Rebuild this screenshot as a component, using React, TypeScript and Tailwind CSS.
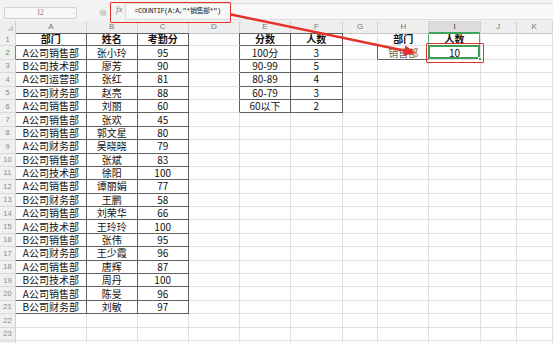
import { ZoomIn } from "lucide-react";

const LETTERS = ["", "A", "B", "C", "D", "E", "F", "G", "H", "I", "J", "K"];
const ROW_COUNT = 24;

type Cell = { t: string; b?: boolean; c?: string };

const people: [string, string, string][] = [
  ["A公司销售部", "张小玲", "95"],
  ["B公司技术部", "廖芳", "90"],
  ["A公司运营部", "张红", "81"],
  ["B公司财务部", "赵亮", "88"],
  ["A公司销售部", "刘丽", "60"],
  ["A公司销售部", "张欢", "45"],
  ["B公司销售部", "郭文星", "80"],
  ["A公司财务部", "吴晓晓", "79"],
  ["B公司销售部", "张斌", "83"],
  ["A公司技术部", "徐阳", "100"],
  ["A公司销售部", "谭丽娟", "77"],
  ["B公司财务部", "王鹏", "58"],
  ["A公司销售部", "刘荣华", "66"],
  ["A公司技术部", "王玲玲", "100"],
  ["B公司销售部", "张伟", "95"],
  ["A公司财务部", "王少霞", "96"],
  ["A公司销售部", "唐辉", "87"],
  ["B公司技术部", "周丹", "100"],
  ["A公司销售部", "陈旻", "96"],
  ["B公司财务部", "刘敏", "97"],
];

const scores: [string, string][] = [
  ["100分", "3"],
  ["90-99", "5"],
  ["80-89", "4"],
  ["60-79", "3"],
  ["60以下", "2"],
];

const cells: Record<string, Cell> = {};
const put = (r: number, c: number, cell: Cell) => {
  cells[`${r},${c}`] = cell;
};

put(1, 1, { t: "部门", b: true });
put(1, 2, { t: "姓名", b: true });
put(1, 3, { t: "考勤分", b: true });
people.forEach((p, i) => {
  put(i + 2, 1, { t: p[0] });
  put(i + 2, 2, { t: p[1] });
  put(i + 2, 3, { t: p[2] });
});
put(1, 5, { t: "分数", b: true });
put(1, 6, { t: "人数", b: true });
scores.forEach((s, i) => {
  put(i + 2, 5, { t: s[0] });
  put(i + 2, 6, { t: s[1] });
});
put(1, 8, { t: "部门", b: true });
put(1, 9, { t: "人数", b: true });
put(2, 8, { t: "销售部", c: "text-[#666]" });
put(2, 9, { t: "10" });

// bordered ranges: A1:C21 and E1:F6 (H2 only has left + bottom)
const inTable = (r: number, c: number) =>
  (r >= 1 && r <= 21 && c >= 1 && c <= 3) || (r >= 1 && r <= 6 && c >= 5 && c <= 6);

const darkRight = (r: number, c: number) =>
  inTable(r, c) || inTable(r, c + 1) || (r === 2 && c === 7);
const darkBottom = (r: number, c: number) =>
  inTable(r, c) || inTable(r + 1, c) || (r === 2 && c === 8);

const gridCols =
  "grid grid-cols-[16px_70.7px_51px_51px_51.3px_51px_51.7px_35.7px_51px_51.3px_36px_36px]";

function HeaderRow() {
  return (
    <div className={`${gridCols} h-[12px]`}>
      {LETTERS.map((l, c) => {
        if (c === 0) {
          return (
            <div key={c} className="relative bg-[#eeeeee] border-r border-b border-r-[#d0d0d0] border-b-[#c8c8c8]">
              <div className="absolute right-[2px] bottom-[2px] w-0 h-0 border-l-[6px] border-l-transparent border-b-[6px] border-b-[#c9c9c9]" />
            </div>
          );
        }
        const selected = c === 9;
        return (
          <div
            key={c}
            className={`relative flex items-center justify-center border-r border-b text-[8px] font-['Liberation_Sans',sans-serif] ${
              selected ? "bg-[#dcdcdc] text-[#333]" : "bg-[#eeeeee] text-[#777]"
            } border-r-[#d3d3d3] ${darkBottom(0, c) ? "border-b-[#606060]" : "border-b-[#c8c8c8]"}`}
          >
            {l}
            {selected && <div className="absolute left-0 right-0 bottom-[-1px] h-[2px] bg-[#3fa65a]" />}
          </div>
        );
      })}
    </div>
  );
}

function DataRow({ r }: { r: number }) {
  return (
    <div className={`${gridCols} h-[13.4px]`}>
      {LETTERS.map((_, c) => {
        if (c === 0) {
          return (
            <div
              key={c}
              className={`relative flex items-center justify-center bg-[#f0f0f0] border-b border-b-[#dadada] border-r text-[7.5px] font-['Liberation_Sans',sans-serif] ${
                r === 2 ? "border-r-[#3fa65a] text-[#3b8f50]" : "border-r-[#d0d0d0] text-[#888]"
              }`}
            >
              {r}
            </div>
          );
        }
        const cell = cells[`${r},${c}`];
        return (
          <div
            key={c}
            className={`relative flex items-center justify-center whitespace-nowrap border-r border-b text-[10px] leading-none ${
              darkRight(r, c) ? "border-r-[#606060]" : "border-r-[#e0e0e0]"
            } ${darkBottom(r, c) ? "border-b-[#606060]" : "border-b-[#e0e0e0]"} ${
              cell?.b ? "font-bold" : ""
            } ${cell?.c ?? "text-[#111]"}`}
          >
            {cell?.t}
            {r === 1 && c === 9 && (
              <div className="absolute -left-[1px] top-0 bottom-0 w-[calc(100%+1px)] border-x border-x-[#56b36c]" />
            )}
            {r === 2 && c === 9 && (
              <>
                <div className="absolute -left-[1px] -top-[1px] w-[calc(100%+1px)] h-[calc(100%+1px)] border-2 border-[#3a9e55]" />
                <div className="absolute -right-[2px] -bottom-[2px] w-[4px] h-[4px] bg-[#3a9e55] border border-white" />
              </>
            )}
          </div>
        );
      })}
    </div>
  );
}

export default function App() {
  const rows = Array.from({ length: ROW_COUNT }, (_, i) => i + 1);

  return (
    <div className="relative w-[553px] h-[343px] overflow-hidden bg-white font-['Noto_Sans_CJK_SC','Liberation_Sans',sans-serif] text-[#111]">
      {/* toolbar: name box + formula bar */}
      <div className="h-[21px] bg-[#f3f3f3] flex items-start">
        <div className="relative mt-[7px] ml-[4px] w-[73px] h-[12px] border border-[#d2d2d2] bg-[#f7f7f7] rounded-[2px] flex items-center justify-center">
          <span className="text-[8px] leading-none text-[#888] font-['Liberation_Serif',serif]">I2</span>
          <span className="absolute right-[1px] top-[2px] text-[6px] leading-none text-[#999]">-</span>
        </div>
        <ZoomIn size={8} strokeWidth={1.6} className="ml-[22px] mt-[9px] text-[#8a8a8a]" />
        <span className="ml-[9px] mt-[5px] text-[9px] leading-none italic text-[#7a7a7a] font-['Liberation_Serif',serif]">
          fx
        </span>
        <div className="ml-[2px] mt-[3px] h-[17px] flex-1 bg-[#f8f8f8] border border-[#dcdcdc] border-r-0 flex items-center pl-[9px]">
          <span className="text-[7px] leading-none tracking-[-0.5px] text-[#222] font-['Liberation_Mono','Noto_Sans_CJK_SC',monospace]">
            =COUNTIF(A:A,"*销售部*")
          </span>
        </div>
      </div>

      {/* sheet grid */}
      <HeaderRow />
      {rows.map((r) => (
        <DataRow key={r} r={r} />
      ))}

      {/* red annotations */}
      <div className="absolute left-[110px] top-[2px] w-[121px] h-[21px] border-[1.5px] border-[#e3312b] rounded-[1px]" />
      <div className="absolute left-[426px] top-[43px] w-[58px] h-[20px] border-[1.5px] border-[#e3312b] rounded-[1px]" />
      <svg className="absolute left-0 top-0 pointer-events-none" width="553" height="343" viewBox="0 0 553 343">
        <line x1="231" y1="14.5" x2="406" y2="51" stroke="#e3312b" strokeWidth="2.4" />
        <polygon points="416,53 403.3,55.8 405.3,45.4" fill="#e3312b" />
      </svg>
    </div>
  );
}
